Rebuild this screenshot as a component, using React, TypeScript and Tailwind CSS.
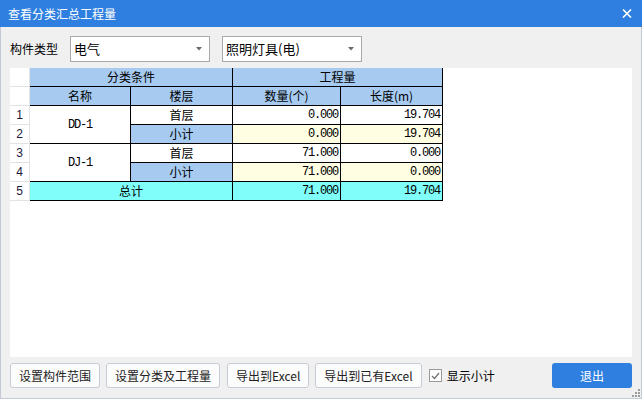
import React from "react";

const cjk = "font-['Noto_Sans_CJK_SC','Noto_Sans',sans-serif]";
const mono = "font-['Liberation_Mono','Noto_Sans_CJK_SC',monospace] text-[12px] tracking-[-1.2px]";

function Arrow() {
  return (
    <svg width="6" height="4" viewBox="0 0 6 4" className="shrink-0">
      <path d="M0 0 L6 0 L3 3.5 Z" fill="#6b6b6b" />
    </svg>
  );
}

function Select({ text }: { text: string }) {
  return (
    <div className="w-[140px] h-[26px] border border-[#a9a9a9] bg-white flex items-center justify-between pl-[3px] pr-[7px]">
      <span className="text-[13px] leading-[16px] text-black">{text}</span>
      <Arrow />
    </div>
  );
}

function Btn({ text }: { text: string }) {
  return (
    <div className="h-[25px] px-[8px] border border-[#c6ccd5] bg-[#fcfcfc] rounded-[3px] flex items-center text-[12px] leading-[14px] text-[#222] whitespace-nowrap">
      {text}
    </div>
  );
}

const num = "border-r border-b border-black flex items-center justify-end pr-[2px] " + mono;
const ctr = "border-r border-b border-black flex items-center justify-center text-[12px] leading-[14px]";
const rh = "border-r border-b border-[#e2e2e2] bg-white flex items-center justify-center text-[12px] leading-[14px] font-['Liberation_Sans',sans-serif] text-[#1a1a3a]";

export default function App() {
  return (
    <div className={`w-[642px] h-[399px] flex flex-col bg-[#f0f0f0] overflow-hidden relative ${cjk}`}>
      <div className="h-[27px] shrink-0 bg-[#2e7fe0] flex items-center justify-between pl-[8px] pr-[10px]">
        <span className="text-white text-[12px] leading-[14px]">查看分类汇总工程量</span>
        <svg width="10" height="9" viewBox="0 0 10 9">
          <path d="M1 0.5 L9 8.5 M9 0.5 L1 8.5" stroke="white" strokeWidth="1.6" />
        </svg>
      </div>
      <div className="flex-1 flex flex-col border-x border-b border-[#c3cad6] px-[9px]">
        <div className="mt-[9px] h-[26px] flex items-center">
          <span className="w-[60px] text-[12px] leading-[14px] text-black">构件类型</span>
          <Select text="电气" />
          <div className="w-[12px]" />
          <Select text="照明灯具(电)" />
        </div>
        <div className="mt-[6px] h-[289px] bg-white">
          <div className="grid grid-cols-[20px_101px_102px_108px_102px] grid-rows-[19px_19px_19px_19px_19px_19px_19px] w-[433px] text-black">
            <div className={rh}></div>
            <div className={`${ctr} col-span-2 bg-[#a6caf0]`}>分类条件</div>
            <div className={`${ctr} col-span-2 bg-[#a6caf0]`}>工程量</div>

            <div className={rh}></div>
            <div className={`${ctr} bg-[#a6caf0]`}>名称</div>
            <div className={`${ctr} bg-[#a6caf0]`}>楼层</div>
            <div className={`${ctr} bg-[#a6caf0]`}>数量(个)</div>
            <div className={`${ctr} bg-[#a6caf0]`}>长度(m)</div>

            <div className={rh}>1</div>
            <div className={`border-r border-b border-black row-span-2 flex items-center justify-center bg-white ${mono}`}>DD-1</div>
            <div className={`${ctr} bg-white`}>首层</div>
            <div className={`${num} bg-white`}>0.000</div>
            <div className={`${num} bg-white`}>19.704</div>

            <div className={rh}>2</div>
            <div className={`${ctr} bg-[#a6caf0]`}>小计</div>
            <div className={`${num} bg-[#fffde2]`}>0.000</div>
            <div className={`${num} bg-[#fffde2]`}>19.704</div>

            <div className={rh}>3</div>
            <div className={`border-r border-b border-black row-span-2 flex items-center justify-center bg-white ${mono}`}>DJ-1</div>
            <div className={`${ctr} bg-white`}>首层</div>
            <div className={`${num} bg-white`}>71.000</div>
            <div className={`${num} bg-white`}>0.000</div>

            <div className={rh}>4</div>
            <div className={`${ctr} bg-[#a6caf0]`}>小计</div>
            <div className={`${num} bg-[#fffde2]`}>71.000</div>
            <div className={`${num} bg-[#fffde2]`}>0.000</div>

            <div className={rh}>5</div>
            <div className={`${ctr} col-span-2 bg-[#80fffa]`}>总计</div>
            <div className={`${num} bg-[#80fffa]`}>71.000</div>
            <div className={`${num} bg-[#80fffa]`}>19.704</div>
          </div>
        </div>
        <div className="mt-[6px] h-[25px] flex items-center">
          <Btn text="设置构件范围" />
          <div className="w-[6px]" />
          <Btn text="设置分类及工程量" />
          <div className="w-[7px]" />
          <Btn text="导出到Excel" />
          <div className="w-[6px]" />
          <Btn text="导出到已有Excel" />
          <div className="w-[7px]" />
          <div className="w-[13px] h-[13px] border border-[#9a9a9a] bg-white flex items-center justify-center">
            <svg width="9" height="8" viewBox="0 0 9 8">
              <path d="M1 4 L3.5 6.5 L8 1" stroke="#707070" strokeWidth="1.2" fill="none" />
            </svg>
          </div>
          <span className="ml-[5px] text-[12px] leading-[14px] text-black">显示小计</span>
          <div className="flex-1" />
          <div className="w-[80px] h-[25px] rounded-[3px] bg-[#2e7fe0] flex items-center justify-center text-white text-[12px] leading-[14px]">退出</div>
        </div>
      </div>
      <div className="absolute right-[2px] bottom-[2px] w-[8px] h-[8px]">
        <svg width="8" height="8" viewBox="0 0 8 8">
          <rect x="6" y="0" width="2" height="2" fill="#9c9c9c" />
          <rect x="3" y="3" width="2" height="2" fill="#9c9c9c" />
          <rect x="6" y="3" width="2" height="2" fill="#9c9c9c" />
          <rect x="0" y="6" width="2" height="2" fill="#9c9c9c" />
          <rect x="3" y="6" width="2" height="2" fill="#9c9c9c" />
          <rect x="6" y="6" width="2" height="2" fill="#9c9c9c" />
        </svg>
      </div>
    </div>
  );
}
